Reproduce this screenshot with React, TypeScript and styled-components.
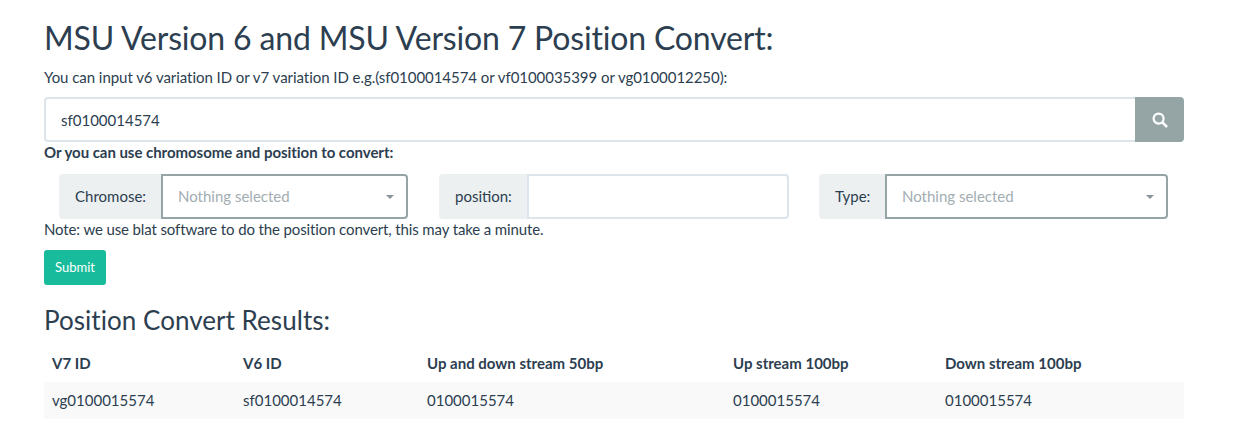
import React from "react";
import styled, { createGlobalStyle } from "styled-components";

const Global = createGlobalStyle`
  html, body { margin: 0; padding: 0; background: #fff; }
  body { font-family: Lato, "Liberation Sans", sans-serif; font-size: 15px; line-height: 21.4px; color: #2c3e50; }
  * { box-sizing: border-box; }
`;
const Page = styled.div`
  width: 1238px; padding: 0 54px 0 44px;
`;
const Title = styled.h1`
  margin: 0; padding-top: 18px; font-size: 32px; line-height: 40px; font-weight: 400; color: #2c3e50; letter-spacing: -0.17px;
`;
const Hint = styled.p`
  margin: 0; padding-top: 9px; height: 39px; letter-spacing: -0.05px;
`;
const SearchGroup = styled.div`
  display: flex; height: 45px;
`;
const SearchInput = styled.div`
  flex: 1; border: 2px solid #dce4ec; border-right: none; border-radius: 4px 0 0 4px;
  padding: 2px 15px 0; display: flex; align-items: center; font-size: 15px; color: #2c3e50;
`;
const SearchButton = styled.div`
  width: 49px; background: #95a5a6; border-radius: 0 4px 4px 0; display: flex; align-items: center; justify-content: center;
`;
const Strong = styled.div`
  font-weight: 700; height: 21px; letter-spacing: -0.04px;
`;
const Filters = styled.div`
  display: grid; grid-template-columns: repeat(3, 380px); margin-top: 11px; padding-left: 15px;
`;
const Group = styled.div<{ $w: number }>`
  display: flex; width: ${p => p.$w}px; height: 45px;
`;
const Addon = styled.div<{ $w: number }>`
  width: ${p => p.$w}px; background: #ecf0f1; border-radius: 4px 0 0 4px; padding-left: 16px; display: flex; align-items: center;
`;
const SelectBox = styled.div`
  flex: 1; border: 2px solid #95a5a6; border-radius: 0 4px 4px 0; padding: 0 12px 0 15px;
  display: flex; align-items: center; justify-content: space-between; color: #a3adb2;
`;
const Caret = styled.span`
  width: 0; height: 0; border-left: 4px solid transparent; border-right: 4px solid transparent; border-top: 4px solid #8a9599;
`;
const PositionInput = styled.div`
  flex: 1; border: 2px solid #dce4ec; border-radius: 0 4px 4px 0;
`;
const Note = styled.p`
  margin: 0; height: 31px; letter-spacing: -0.125px;
`;
const Submit = styled.button`
  display: block; width: 62px; height: 35px; padding: 0 0 2px; border: none; border-radius: 3px; background: #18bc9c; color: #fff;
  font-family: inherit; font-size: 13px;
`;
const Sub = styled.h3`
  margin: 0; padding-top: 19px; font-size: 26px; line-height: 32px; font-weight: 400; letter-spacing: 0.04px;
`;
const Table = styled.table`
  width: 1140px; border-collapse: collapse; table-layout: fixed; margin-top: 10px;
`;
const Th = styled.th<{ $w: number }>`
  width: ${p => p.$w}px; text-align: left; padding: 7px 8px 8px; height: 36px; line-height: 21px; font-weight: 700;
`;
const Row = styled.tr`
  background: #f9f9f9;
`;
const Td = styled.td`
  padding: 8px; height: 37px; line-height: 21px;
`;

const heads: [string, number][] = [["V7 ID", 191], ["V6 ID", 184], ["Up and down stream 50bp", 306], ["Up stream 100bp", 212], ["Down stream 100bp", 247]];
const cells = ["vg0100015574", "sf0100014574", "0100015574", "0100015574", "0100015574"];

export default function App() {
  return (
    <Page>
      <Global />
      <Title>MSU Version 6 and MSU Version 7 Position Convert:</Title>
      <Hint>You can input v6 variation ID or v7 variation ID e.g.(sf0100014574 or vf0100035399 or vg0100012250):</Hint>
      <SearchGroup>
        <SearchInput>sf0100014574</SearchInput>
        <SearchButton>
          <svg width="16" height="16" viewBox="0 0 16 16" fill="none" stroke="#fff">
            <circle cx="6.6" cy="6.6" r="5" strokeWidth="2.2" />
            <path d="M10.4 10.4 L15 15" strokeWidth="2.6" />
          </svg>
        </SearchButton>
      </SearchGroup>
      <Strong>Or you can use chromosome and position to convert:</Strong>
      <Filters>
        <Group $w={349}>
          <Addon $w={102}>Chromose:</Addon>
          <SelectBox>Nothing selected<Caret /></SelectBox>
        </Group>
        <Group $w={350}>
          <Addon $w={88}>position:</Addon>
          <PositionInput />
        </Group>
        <Group $w={349}>
          <Addon $w={66}>Type:</Addon>
          <SelectBox>Nothing selected<Caret /></SelectBox>
        </Group>
      </Filters>
      <Note>Note: we use blat software to do the position convert, this may take a minute.</Note>
      <Submit>Submit</Submit>
      <Sub>Position Convert Results:</Sub>
      <Table>
        <thead><tr>{heads.map(([h, w]) => <Th key={h} $w={w}>{h}</Th>)}</tr></thead>
        <tbody><Row>{cells.map((c, i) => <Td key={i}>{c}</Td>)}</Row></tbody>
      </Table>
    </Page>
  );
}
